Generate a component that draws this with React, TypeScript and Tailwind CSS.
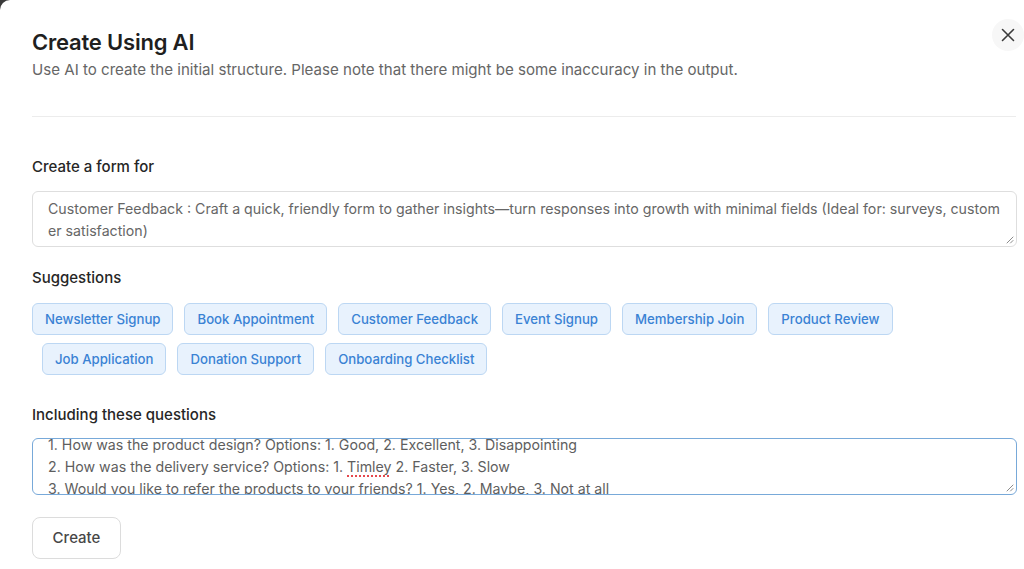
import React from "react";

const row1 = ["Newsletter Signup", "Book Appointment", "Customer Feedback", "Event Signup", "Membership Join", "Product Review"];
const row2 = ["Job Application", "Donation Support", "Onboarding Checklist"];

function Chip({ label }: { label: string }) {
  return (
    <button className="h-[32px] px-[12px] rounded-[6px] border border-[#bcd7f3] bg-[#e8f2fd] text-[#3a82d4] text-[13.2px] font-medium leading-none whitespace-nowrap pt-px">
      {label}
    </button>
  );
}

function Grip() {
  return (
    <svg className="absolute right-[2px] bottom-[2px]" width="9" height="9" viewBox="0 0 9 9">
      <path d="M8 2 L2 8 M8 5.5 L5.5 8" stroke="#8a8a8a" strokeWidth="1" strokeLinecap="round" />
    </svg>
  );
}

export default function App() {
  return (
    <div className="w-[1024px] h-[569px] bg-[#3a3a3a] overflow-hidden" style={{ fontFamily: "Inter, 'Noto Sans', sans-serif" }}>
      <div className="relative w-full h-full bg-white rounded-tl-[10px] pl-[32px] pr-[7px] pt-[28px]">
        <button className="absolute right-0 top-[19px] w-[32px] h-[32px] rounded-full bg-[#f7f7f7] flex items-center justify-center">
          <svg width="14" height="14" viewBox="0 0 14 14">
            <path d="M1.5 1.5 L12.5 12.5 M12.5 1.5 L1.5 12.5" stroke="#3b3b3b" strokeWidth="1.6" strokeLinecap="round" />
          </svg>
        </button>
        <h1 className="text-[22px] leading-[28px] font-semibold text-[#1f1f1f] tracking-[-0.2px]">Create Using AI</h1>
        <p className="mt-[3px] text-[15.1px] leading-[22px] text-[#666666]">
          Use AI to create the initial structure. Please note that there might be some inaccuracy in the output.
        </p>
        <div className="mt-[35px] h-px bg-[#ececec] mr-px" />

        <div className="mt-[39px] text-[15px] leading-[22px] font-medium text-[#262626]">Create a form for</div>
        <div className="relative mt-[13px] h-[56px] rounded-[6px] border border-[#dedede] px-[15px] pt-[6px] text-[14.2px] leading-[22px] text-[#666666] overflow-hidden whitespace-nowrap">
          <div>Customer Feedback : Craft a quick, friendly form to gather insights—turn responses into growth with minimal fields (Ideal for: surveys, custom</div>
          <div>er satisfaction)</div>
          <Grip />
        </div>

        <div className="mt-[20px] text-[15px] leading-[22px] font-medium text-[#262626]">Suggestions</div>
        <div className="mt-[14px] flex flex-col gap-[8px]">
          <div className="flex gap-[11px]">
            {row1.map((l) => (
              <Chip key={l} label={l} />
            ))}
          </div>
          <div className="flex gap-[11px] pl-[10px]">
            {row2.map((l) => (
              <Chip key={l} label={l} />
            ))}
          </div>
        </div>

        <div className="mt-[29px] text-[15px] leading-[22px] font-medium text-[#262626]">Including these questions</div>
        <div className="relative mt-[12px] h-[57px] rounded-[6px] border border-[#78a9d9] px-[15px] text-[14.2px] leading-[22px] text-[#5e5e5e] overflow-hidden whitespace-nowrap">
          <div className="-mt-[5px]">
            <div>1. How was the product design? Options: 1. Good, 2. Excellent, 3. Disappointing</div>
            <div>
              2. How was the delivery service? Options: 1.{" "}
              <span className="underline decoration-dotted decoration-[#e5484d] decoration-[1.5px] underline-offset-[3px]">Timley</span> 2. Faster, 3. Slow
            </div>
            <div>3. Would you like to refer the products to your friends? 1. Yes, 2. Maybe, 3. Not at all</div>
          </div>
          <Grip />
        </div>

        <button className="mt-[22px] h-[42px] w-[89px] rounded-[8px] border border-[#dcdcdc] bg-white text-[15px] font-medium text-[#474747]">
          Create
        </button>
      </div>
    </div>
  );
}
